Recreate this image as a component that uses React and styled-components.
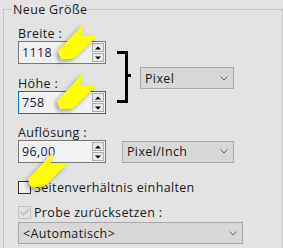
import React from "react";
import styled, { createGlobalStyle } from "styled-components";

const GlobalStyle = createGlobalStyle`
  html, body {
    margin: 0;
    background: #e3e3e3;
    overflow: hidden;
  }
  body {
    font-family: "Open Sans", "Noto Sans", sans-serif;
    font-size: 12.5px;
    letter-spacing: 0.35px;
    color: #1a1a1a;
  }
`;

const Page = styled.div`
  position: relative;
  width: 283px;
  height: 248px;
  padding-left: 3px;
  box-sizing: border-box;
  overflow: hidden;
`;

const GroupBox = styled.div`
  margin-top: 9px;
  height: 260px;
  border: 1px solid #c6c6c6;
  border-bottom: none;
  padding-left: 14px;
  display: flex;
  flex-direction: column;
  align-items: flex-start;
`;

const Title = styled.div`
  margin: -8px 0 0 -7px;
  padding: 0 2px;
  line-height: 16px;
  background: #e3e3e3;
`;

const Label = styled.div`
  line-height: 15px;
  height: 15px;
  margin-top: ${({ $mt }) => $mt || 0}px;
  white-space: nowrap;
`;

const SizeRow = styled.div`
  display: flex;
  align-items: flex-start;
  margin-top: 8px;
`;

const Column = styled.div`
  display: flex;
  flex-direction: column;
`;

const NumberBox = styled.div`
  width: 88px;
  height: 23px;
  box-sizing: border-box;
  border: 1px solid ${({ $focused }) => ($focused ? "#0078d7" : "#7a7a7a")};
  background: #f1f1f1;
  display: flex;
  align-items: center;
  justify-content: space-between;
  padding: 0 1px 0 3px;
  color: #1c1450;
`;

const Spin = styled.div`
  display: flex;
  flex-direction: column;
  gap: 1px;
`;

const SpinButton = styled.div`
  width: 12px;
  height: 9px;
  box-sizing: border-box;
  border: 1px solid #acacac;
  background: #e9e9e9;
  display: flex;
  align-items: center;
  justify-content: center;
`;

const Bracket = styled.div`
  position: relative;
  width: 11px;
  height: 52px;
  box-sizing: border-box;
  margin: 25px 0 0 11px;
  border: 3px solid #000;
  border-left: none;

  &::after {
    content: "";
    position: absolute;
    top: 20px;
    right: -6px;
    width: 3px;
    height: 3px;
    background: #000;
  }
`;

const Select = styled.div`
  width: ${({ $w }) => $w}px;
  height: 22px;
  box-sizing: border-box;
  margin: ${({ $m }) => $m || "0"};
  border: 1px solid #a9a9a9;
  background: #d8d8d8;
  display: flex;
  align-items: center;
  justify-content: space-between;
  padding: 0 5px 0 4px;
  white-space: nowrap;
`;

const FieldRow = styled.div`
  display: flex;
  align-items: center;
  gap: 16px;
`;

const CheckRow = styled.div`
  display: flex;
  align-items: center;
  height: 16px;
  gap: 3px;
  margin-top: ${({ $mt }) => $mt}px;
  white-space: nowrap;
`;

const Box = styled.span`
  width: 13px;
  height: 13px;
  box-sizing: border-box;
  border: 1px solid ${({ $disabled }) => ($disabled ? "#c2c2c2" : "#333")};
  background: ${({ $disabled }) => ($disabled ? "#e3e3e3" : "#f2f2f2")};
  display: flex;
  align-items: center;
  justify-content: center;
`;

const Arrow = styled.svg`
  position: absolute;
  left: ${({ $x }) => $x}px;
  top: ${({ $y }) => $y}px;
  filter: drop-shadow(-2px 2px 2px rgba(0, 0, 0, 0.35));
`;

const Up = () => (
  <svg width="6" height="4" viewBox="0 0 6 4">
    <polygon points="0,3.5 3,0.5 6,3.5" fill="#000" />
  </svg>
);

const Down = () => (
  <svg width="6" height="4" viewBox="0 0 6 4">
    <polygon points="0,0.5 3,3.5 6,0.5" fill="#000" />
  </svg>
);

const Chevron = () => (
  <svg width="8" height="5" viewBox="0 0 8 5">
    <polyline points="0.5,0.5 4,4 7.5,0.5" fill="none" stroke="#666" strokeWidth="1" />
  </svg>
);

const NumberField = ({ value, focused }) => (
  <NumberBox $focused={focused}>
    <span>{value}</span>
    <Spin>
      <SpinButton><Up /></SpinButton>
      <SpinButton><Down /></SpinButton>
    </Spin>
  </NumberBox>
);

const YellowArrow = ({ x, y }) => (
  <Arrow $x={x} $y={y} width="46" height="42" viewBox="0 0 46 42">
    <polygon
      points="29,1.5 26,13 42,14 19,36.5 6,37.5 2.8,29"
      fill="#ffff00"
    />
  </Arrow>
);

export default function App() {
  return (
    <>
      <GlobalStyle />
      <Page>
        <GroupBox>
          <Title>Neue Größe</Title>
          <SizeRow>
            <Column>
              <Label>Breite :</Label>
              <NumberField value="1118" />
              <Label $mt={12}>Höhe :</Label>
              <NumberField value="758" focused />
            </Column>
            <Bracket />
            <Select $w={94} $m="41px 0 0 12px">
              <span>Pixel</span>
              <Chevron />
            </Select>
          </SizeRow>
          <Label $mt={11}>Auflösung :</Label>
          <FieldRow>
            <NumberField value="96,00" />
            <Select $w={112}>
              <span>Pixel/Inch</span>
              <Chevron />
            </Select>
          </FieldRow>
          <CheckRow $mt={16}>
            <Box />
            <span>Seitenverhältnis einhalten</span>
          </CheckRow>
          <CheckRow $mt={9}>
            <Box $disabled>
              <svg width="10" height="8" viewBox="0 0 10 8">
                <polyline points="0.8,4 3.6,6.8 9.2,1" fill="none" stroke="#b9b9b9" strokeWidth="1.3" />
              </svg>
            </Box>
            <span>Probe zurücksetzen :</span>
          </CheckRow>
          <Select $w={225} $m="2px 0 0 0">
            <span>&lt;Automatisch&gt;</span>
            <Chevron />
          </Select>
        </GroupBox>
        <YellowArrow x={55} y={22} />
        <YellowArrow x={54} y={72} />
        <YellowArrow x={25} y={150} />
      </Page>
    </>
  );
}
